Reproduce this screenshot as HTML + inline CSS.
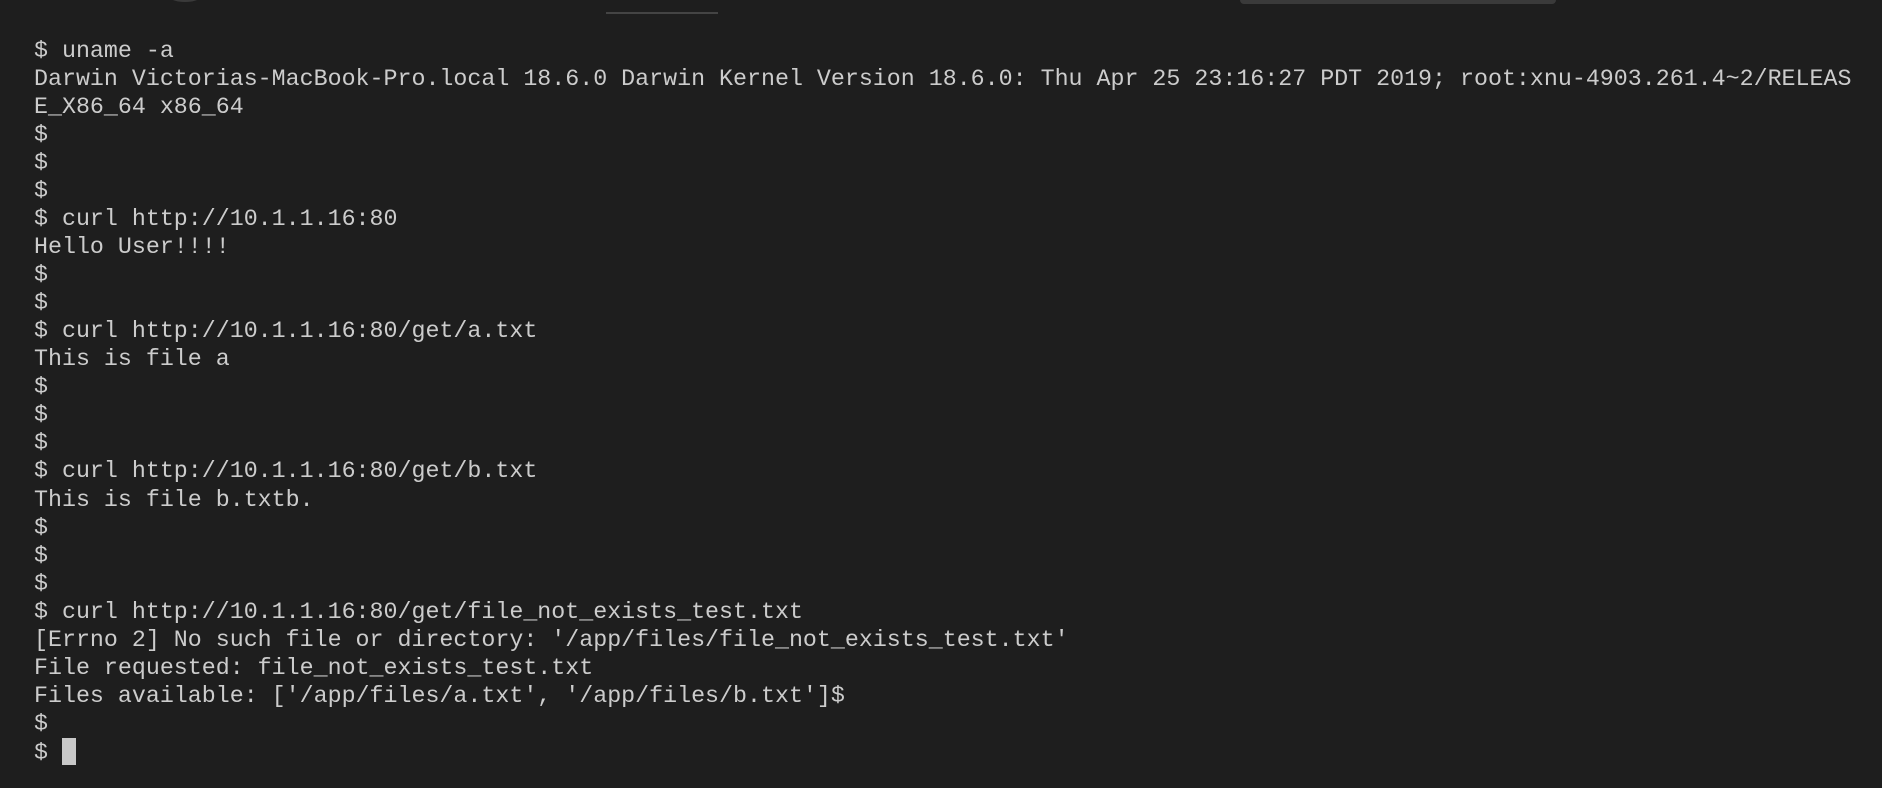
<!DOCTYPE html>
<html><head><meta charset="utf-8"><style>
html,body{margin:0;padding:0;background:#1e1e1e;width:1882px;height:788px;overflow:hidden}
pre{position:absolute;left:34px;top:37px;margin:0;font-family:"Liberation Mono","DejaVu Sans Mono",monospace;font-size:23.3px;line-height:28.03px;color:#cccccc;white-space:pre}
.cur{display:inline-block;width:14px;height:27px;background:#c8c8c8;vertical-align:-6px}
</style></head><body>
<div style="position:absolute;left:170px;top:-8px;width:30px;height:10px;border-radius:50%;background:#3a3a3a"></div>
<div style="position:absolute;left:1240px;top:0;width:316px;height:4px;background:#3a3a3a;border-radius:0 0 6px 6px"></div>
<div style="position:absolute;left:606px;top:12px;width:112px;height:2px;background:#444"></div>
<pre>$ uname -a
Darwin Victorias-MacBook-Pro.local 18.6.0 Darwin Kernel Version 18.6.0: Thu Apr 25 23:16:27 PDT 2019; root:xnu-4903.261.4~2/RELEAS
E_X86_64 x86_64
$
$
$
$ curl http://10.1.1.16:80
Hello User!!!!
$
$
$ curl http://10.1.1.16:80/get/a.txt
This is file a
$
$
$
$ curl http://10.1.1.16:80/get/b.txt
This is file b.txtb.
$
$
$
$ curl http://10.1.1.16:80/get/file_not_exists_test.txt
[Errno 2] No such file or directory: '/app/files/file_not_exists_test.txt'
File requested: file_not_exists_test.txt
Files available: ['/app/files/a.txt', '/app/files/b.txt']$
$
$ <span class="cur"></span></pre>
</body></html>
